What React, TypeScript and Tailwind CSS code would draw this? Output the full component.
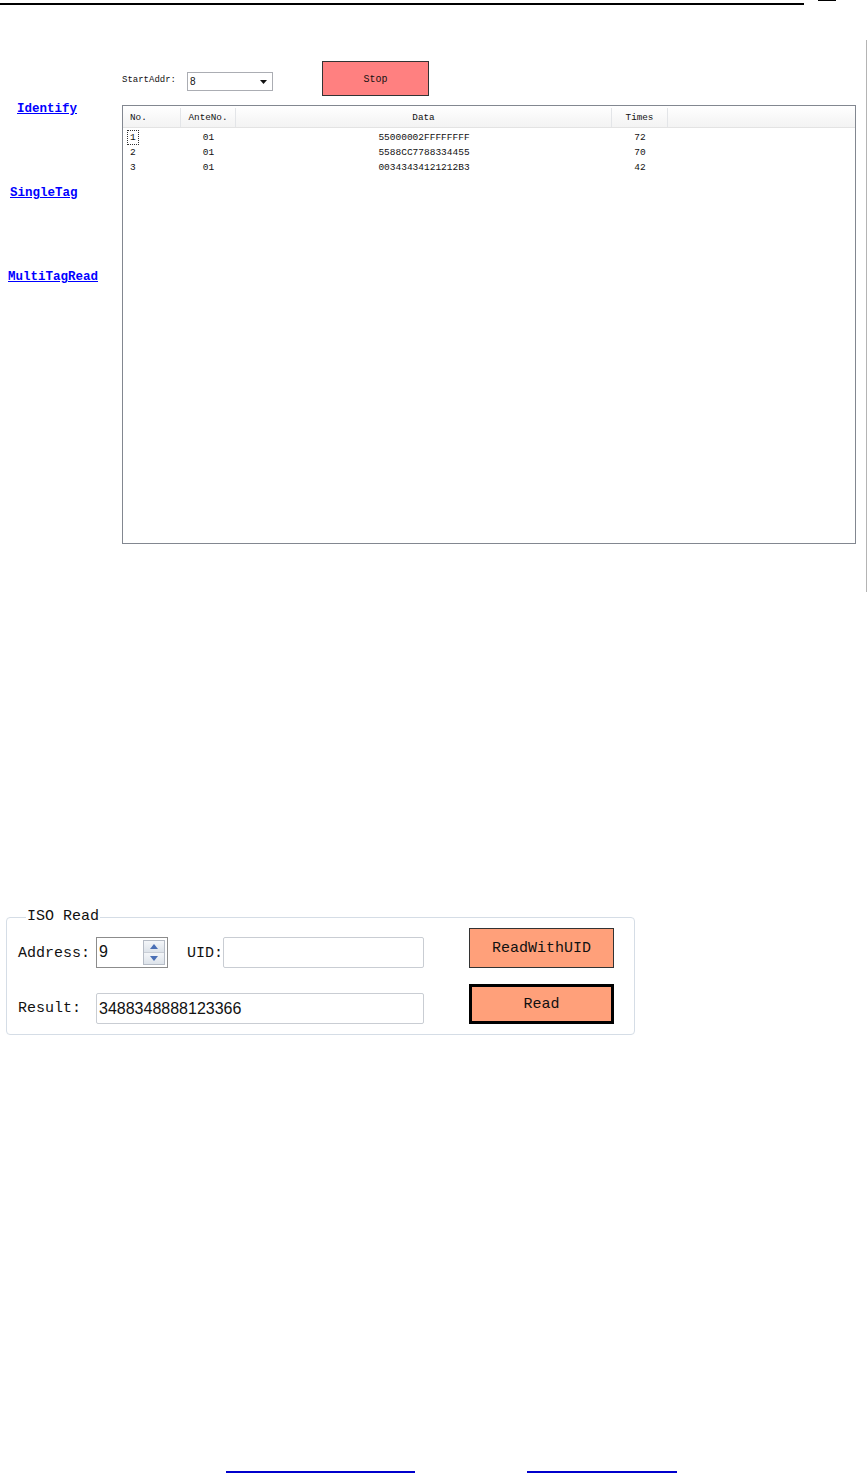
import React from 'react';

const rows = [
  { no: '1', ante: '01', data: '55000002FFFFFFFF', times: '72' },
  { no: '2', ante: '01', data: '5588CC7788334455', times: '70' },
  { no: '3', ante: '01', data: '00343434121212B3', times: '42' },
];

const SideLink: React.FC<{ label: string; pad: string }> = ({ label, pad }) => (
  <a href="#" className={`${pad} text-[12.5px] leading-[14px] font-bold text-[#0000ff] underline`}>
    {label}
  </a>
);

const Spinner: React.FC = () => (
  <div className="flex h-[31px] w-[72px] items-stretch border border-[#8c8c8c] bg-white">
    <span className="flex-1 pl-[2px] pt-[4px] text-[16px] leading-[20px] font-['Liberation_Sans',sans-serif]">9</span>
    <div className="my-[2px] mr-[2px] flex w-[22px] flex-col border border-[#b6bcc6]">
      <div className="flex flex-1 items-center justify-center border-b border-[#c9ced6] bg-gradient-to-b from-[#f4f6f9] to-[#dde3ea]">
        <svg width="8" height="5" viewBox="0 0 8 5">
          <path d="M0 5 L4 0 L8 5 Z" fill="#4a6fb5" />
        </svg>
      </div>
      <div className="flex flex-1 items-center justify-center bg-gradient-to-b from-[#f4f6f9] to-[#dde3ea]">
        <svg width="8" height="5" viewBox="0 0 8 5">
          <path d="M0 0 L8 0 L4 5 Z" fill="#4a6fb5" />
        </svg>
      </div>
    </div>
  </div>
);

export default function App() {
  return (
    <div className="flex h-[1474px] w-[868px] flex-col overflow-hidden bg-white font-['Liberation_Mono',monospace] text-[#111]">
      {/* page header rule */}
      <div className="flex h-[40px] items-start">
        <div className="mt-[3px] h-[2px] w-[804px] bg-black" />
        <div className="ml-[14px] h-[1px] w-[18px] bg-black" />
      </div>

      {/* screenshot of reader window */}
      <div className="flex h-[552px] w-[867px] border-r border-[#b4b4b4]">
        <div className="flex w-[122px] flex-col gap-[70px] pt-[62px]">
          <SideLink label="Identify" pad="pl-[17px]" />
          <SideLink label="SingleTag" pad="pl-[10px]" />
          <SideLink label="MultiTagRead" pad="pl-[8px]" />
        </div>

        <div className="flex flex-col">
          <div className="mt-[21px] flex h-[35px] items-start">
            <span className="mt-[13px] w-[65px] text-[9px] leading-[12px]">StartAddr:</span>
            <div className="mt-[11px] flex h-[19px] w-[86px] items-center justify-between border border-[#abadb3] bg-white pl-[2px] pr-[5px]">
              <span className="text-[10px] font-['Liberation_Sans',sans-serif]">8</span>
              <svg width="7" height="4" viewBox="0 0 7 4">
                <path d="M0 0 L7 0 L3.5 4 Z" fill="#111" />
              </svg>
            </div>
            <button className="ml-[49px] h-[35px] w-[107px] border border-[#333] bg-[#ff8080] pt-[2px] text-[10px]">
              Stop
            </button>
          </div>

          <div className="mt-[9px] h-[439px] w-[734px] border border-[#828790] bg-white">
            <div className="flex h-[22px] border-b border-[#e3e3e3] bg-gradient-to-b from-white to-[#f3f3f3] pt-[2px] text-[9.3px] leading-[20px]">
              <div className="w-[58px] border-r border-[#e3e5e8] pl-[7px]">No.</div>
              <div className="w-[55px] border-r border-[#e3e5e8] text-center">AnteNo.</div>
              <div className="w-[376px] border-r border-[#e3e5e8] text-center">Data</div>
              <div className="w-[56px] border-r border-[#e3e5e8] text-center">Times</div>
            </div>
            <div className="pt-[3px] text-[9.5px]">
              {rows.map((r, i) => (
                <div key={r.no} className="flex h-[15px] items-center">
                  <div className="w-[58px] pl-[5px]">
                    <span className={`inline-block px-[2px] leading-[13px] ${i === 0 ? 'outline outline-1 outline-dotted outline-[#333]' : ''}`}>
                      {r.no}
                    </span>
                  </div>
                  <div className="w-[55px] text-center">{r.ante}</div>
                  <div className="w-[376px] text-center">{r.data}</div>
                  <div className="w-[56px] text-center">{r.times}</div>
                </div>
              ))}
            </div>
          </div>
        </div>
      </div>

      {/* ISO Read group */}
      <fieldset className="ml-[6px] mt-[316px] w-[629px] rounded-[4px] border border-[#d5dde6] pb-[10px] pl-[11px] pr-[20px]">
        <legend className="ml-[8px] px-[1px] text-[15px] leading-[18px]">ISO Read</legend>
        <div className="flex flex-col gap-[16px] pt-[2px]">
          <div className="flex h-[40px] items-end">
            <span className="flex h-[31px] w-[78px] items-center pt-[3px] text-[15px]">Address:</span>
            <Spinner />
            <span className="ml-[19px] flex h-[31px] items-center pt-[3px] text-[15px]">UID:</span>
            <div className="h-[31px] w-[201px] rounded-[2px] border border-[#c9cdd3] bg-white" />
            <button className="ml-auto h-[40px] w-[145px] border border-[#333] bg-[#ffa07a] pt-[2px] text-[15px]">
              ReadWithUID
            </button>
          </div>
          <div className="flex h-[40px] items-end">
            <span className="flex h-[31px] w-[78px] items-center pt-[1px] text-[15px]">Result:</span>
            <div className="flex h-[31px] w-[328px] items-center rounded-[2px] border border-[#c9cdd3] bg-white pl-[2px] text-[16px] font-['Liberation_Sans',sans-serif]">
              3488348888123366
            </div>
            <button className="ml-auto h-[40px] w-[145px] border-[3px] border-black bg-[#ffa07a] pt-[2px] text-[15px]">
              Read
            </button>
          </div>
        </div>
      </fieldset>

      {/* footer link rules */}
      <div className="mb-[1px] mt-auto flex">
        <div className="ml-[226px] h-[2px] w-[189px] bg-[#0000cc]" />
        <div className="ml-[112px] h-[2px] w-[150px] bg-[#0000cc]" />
      </div>
    </div>
  );
}
